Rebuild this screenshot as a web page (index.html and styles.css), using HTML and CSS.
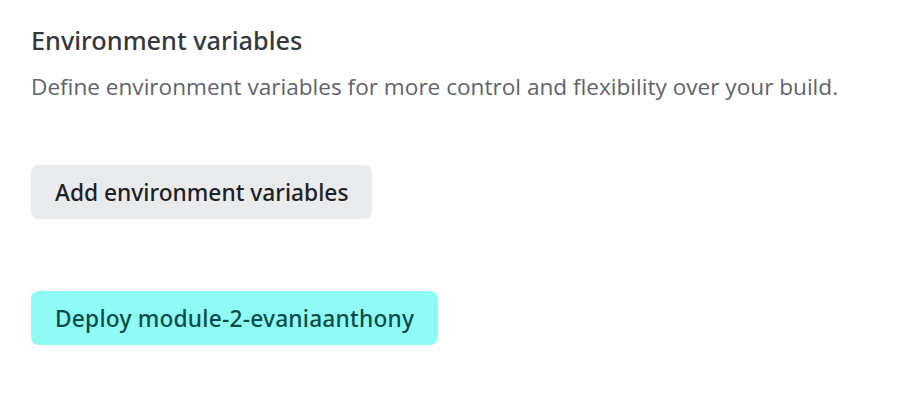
FILE: index.html
```html
<!DOCTYPE html>
<html lang="en">
<head>
<meta charset="utf-8">
<title>Environment variables</title>
<link rel="stylesheet" href="styles.css">
</head>
<body>
<section class="section">
  <h2 class="title">Environment variables</h2>
  <p class="desc">Define environment variables for more control and flexibility over your build.</p>
  <div class="row">
    <button class="btn btn-secondary" type="button">Add environment variables</button>
  </div>
  <div class="row row-deploy">
    <button class="btn btn-primary" type="button">Deploy module-2-evaniaanthony</button>
  </div>
</section>
</body>
</html>
```
FILE: styles.css
```css
* { box-sizing: border-box; }
html, body { margin: 0; background: #ffffff; }
body {
  font-family: "Open Sans", "Noto Sans", sans-serif;
}
.section {
  padding: 24px 31px;
  display: flex;
  flex-direction: column;
  align-items: flex-start;
}
.title {
  margin: 0;
  font-family: "Noto Sans", "Open Sans", sans-serif;
  font-size: 25.3px;
  font-weight: 500;
  line-height: 32px;
  color: #35383d;
}
.desc {
  margin: 16px 0 0;
  font-size: 22.6px;
  font-weight: 400;
  line-height: 30px;
  color: #5f636a;
}
.row { margin-top: 63px; }
.row-deploy { margin-top: 72px; }
.btn {
  font-family: "Noto Sans", "Open Sans", sans-serif;
  border: none;
  border-radius: 8px;
  height: 54px;
  padding: 0 24px;
  font-size: 22.75px;
  font-weight: 500;
  cursor: pointer;
}
.btn-secondary { background: #e9ebed; color: #1e2125; }
.btn-primary { background: #8ffbf5; color: #0b4a47; letter-spacing: 0.2px; }
```
